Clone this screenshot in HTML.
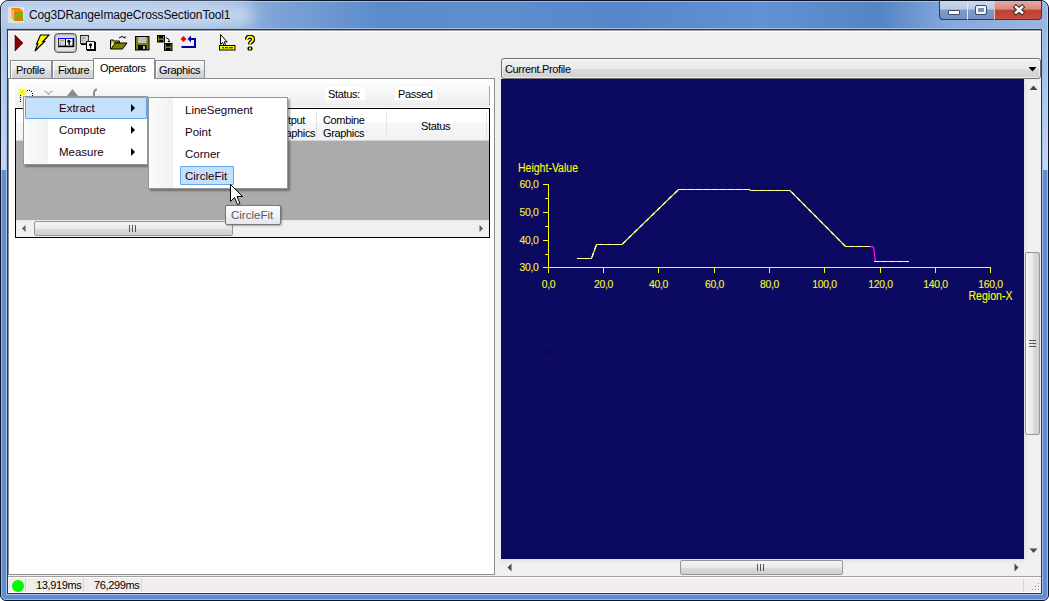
<!DOCTYPE html>
<html><head><meta charset="utf-8">
<style>
*{margin:0;padding:0;box-sizing:border-box}
html,body{width:1049px;height:601px;overflow:hidden;background:#fff}
body{position:relative;font-family:"Liberation Sans",sans-serif;font-size:12px;color:#000}
.a{position:absolute}
.t{position:absolute;white-space:nowrap;line-height:1}
#frame{left:0;top:0;width:1049px;height:601px;border:1px solid #0d1626;border-radius:8px 8px 6px 6px;
 background:linear-gradient(90deg,#aac2e3 0px,#a2bce0 200px,#7ba2d6 280px,#5c8bcc 380px,#5f8ecf 500px,#5686c9 620px,#6391d3 760px,#5584c5 880px,#86aadc 950px,#9ab6dd 1049px) top/100% 29px no-repeat,#5f8ecf}
#frame2{left:1px;top:1px;width:1047px;height:599px;border:1px solid rgba(205,225,250,.55);border-radius:7px 7px 5px 5px}
#titleglow{left:4px;top:3px;width:250px;height:24px;border-radius:12px;background:rgba(215,228,245,.7);filter:blur(7px)}
#client0{left:6px;top:28px;width:1037px;height:567px;border:1px solid #a4c0e8}
#client{left:7px;top:29px;width:1035px;height:565px;background:#f0f0f0;border:1px solid #2b3a56}
/* window buttons */
.wb{top:1px;height:19px;border:1px solid #2b3a55;border-top:none}
</style></head><body>
<div class="a" id="frame"></div>
<div class="a" style="left:1px;top:20px;width:6px;height:150px;background:linear-gradient(#a9c1e2,#c4d5ee)"></div>
<div class="a" style="left:1042px;top:20px;width:6px;height:150px;background:linear-gradient(#9ab6dd,#c4d5ee)"></div>
<div class="a" id="frame2"></div>
<div class="a" id="titleglow"></div>
<!-- app icon -->
<svg class="a" style="left:8px;top:7px" width="16" height="16" viewBox="0 0 16 16">
 <rect x="0" y="0" width="16" height="16" fill="#e4e2dd"/>
 <polygon points="3,1 11.5,1 15,4.3 6.2,4.3" fill="#f28a00"/>
 <polygon points="3,1 6.2,4.3 6.2,14 3,10.5" fill="#ffb055"/>
 <polygon points="6.2,4.3 15,4.3 15,14 6.2,14" fill="#e07600"/>
 <polyline points="6.3,12.2 9.7,7 13.8,7 13.8,12.6 15.5,12.6" fill="none" stroke="#10f010" stroke-width="1.5"/>
</svg>
<div class="t" style="left:29px;top:9px;font-size:12px;letter-spacing:-0.15px;color:#050a18">Cog3DRangeImageCrossSectionTool1</div>
<!-- window buttons -->
<div class="a wb" style="left:939px;width:29px;border-radius:0 0 0 4px;background:linear-gradient(#cad8ec 0,#b9cbe6 45%,#7c9bc9 50%,#7392c3 100%)"></div>
<div class="a wb" style="left:967px;width:28px;border-left-color:#dfe8f4;background:linear-gradient(#cad8ec 0,#b9cbe6 45%,#7c9bc9 50%,#7392c3 100%)"></div>
<div class="a wb" style="left:994px;width:48px;border-left-color:#e8c0b8;border-radius:0 0 4px 0;background:linear-gradient(#e8aaa2 0,#d88a80 45%,#c0402e 52%,#c8503c 100%)"></div>
<div class="a" style="left:948px;top:10px;width:12px;height:5px;background:#fff;border:1px solid #3a4a66;border-radius:1px"></div>
<div class="a" style="left:976px;top:6px;width:10px;height:8px;background:#7393c4;border:2px solid #f4f6fa;outline:1px solid #3a4a66;border-radius:1px"></div>
<svg class="a" style="left:1012px;top:4px" width="14" height="12" viewBox="0 0 14 12"><path d="M4,3 L10,8.5 M10,3 L4,8.5" stroke="#3a2a2a" stroke-width="4.6" stroke-linecap="square"/><path d="M4,3 L10,8.5 M10,3 L4,8.5" stroke="#fff" stroke-width="2.6" stroke-linecap="square"/></svg>

<div class="a" id="client0"></div>
<div class="a" id="client"></div>

<!-- toolbar -->
<div class="a" style="left:8px;top:30px;width:1033px;height:1px;background:#a0a0a0"></div>
<div class="a" style="left:8px;top:31px;width:1033px;height:1px;background:#fff"></div>
<!-- play -->
<svg class="a" style="left:14px;top:34px" width="10" height="18" viewBox="0 0 10 18"><polygon points="1,1 9,9 1,17" fill="#800000" stroke="#400" stroke-width="0.6"/></svg>
<!-- lightning -->
<svg class="a" style="left:34px;top:34px" width="16" height="18" viewBox="0 0 16 18"><polygon points="6.5,1 15,1 9,7.5 10.5,7.5 1,17 3.8,10 2.6,10" fill="#ffff00" stroke="#000" stroke-width="1.2" stroke-linejoin="miter"/></svg>
<!-- pressed button -->
<div class="a" style="left:54px;top:33px;width:23px;height:20px;border:1px solid #5e5e5e;border-radius:4px;background:linear-gradient(#d2d2d2,#e2e2e2 45%,#e6e6e6);box-shadow:inset 0 0 1px 1px #a8a8a8"></div>
<svg class="a" style="left:57px;top:37px" width="18" height="11" viewBox="0 0 18 11">
 <rect x="1.5" y="1.5" width="7" height="7.5" fill="#d0d0d0" stroke="#333" stroke-width="1"/><rect x="1" y="1" width="8" height="1" fill="#0000ff"/>
 <rect x="3" y="3" width="4" height="1" fill="#999"/><rect x="3" y="5" width="1" height="1" fill="#999"/><rect x="3" y="7" width="1" height="1" fill="#999"/>
 <rect x="8.5" y="1.5" width="7.5" height="7.5" fill="#fff" stroke="#000" stroke-width="1"/><rect x="8" y="1" width="9" height="1" fill="#0000ff"/>
 <circle cx="11.8" cy="4.3" r="1.5" fill="#000"/><rect x="11.5" y="4.5" width="1.4" height="3.5" fill="#000"/><rect x="12" y="4" width="1.5" height="1.2" fill="#000"/>
 <rect x="1" y="9" width="16" height="1.2" fill="#000"/><rect x="16" y="1" width="1.2" height="9" fill="#000"/>
</svg>
<!-- float windows icon -->
<svg class="a" style="left:80px;top:35px" width="16" height="16" viewBox="0 0 16 16">
 <rect x="0.5" y="0.5" width="8" height="8" fill="#d0d0d0" stroke="#333" stroke-width="1"/><rect x="0" y="0" width="9" height="1" fill="#0000ff"/>
 <rect x="2" y="2.5" width="3" height="1" fill="#888"/><rect x="2" y="5" width="1" height="1" fill="#888"/>
 <rect x="1" y="9" width="6" height="1" fill="#000"/>
 <rect x="6.5" y="6.5" width="8" height="8" fill="#fff" stroke="#000" stroke-width="1"/><rect x="6" y="6" width="9" height="1" fill="#0000ff"/>
 <circle cx="10.5" cy="9.8" r="1.6" fill="#000"/><rect x="10" y="10" width="1.2" height="3.5" fill="#000"/>
 <rect x="7" y="15" width="9" height="1" fill="#000"/><rect x="15" y="7" width="1" height="9" fill="#000"/>
</svg>
<!-- open folder -->
<svg class="a" style="left:110px;top:35px" width="18" height="15" viewBox="0 0 18 15">
 <path d="M9,3 q3,-3 6,0" fill="none" stroke="#000" stroke-width="1"/><path d="M14,2 l1.5,1.5 l0,-2.5" fill="#000"/>
 <path d="M0.5,5 h3 l1,1 h5 v2 h-9z" fill="#c8c800" stroke="#000" stroke-width="1"/>
 <path d="M0.5,5.5 v8.5 h12 l4.5,-6 h-12 l-4,6" fill="#808000" stroke="#000" stroke-width="1"/>
 <path d="M1.5,7 v5 l3,-4z" fill="#ffff80"/>
</svg>
<!-- save -->
<svg class="a" style="left:135px;top:36px" width="15" height="15" viewBox="0 0 15 15">
 <rect x="0.5" y="0.5" width="13.5" height="13.5" fill="#808000" stroke="#000"/>
 <rect x="3" y="1" width="8.5" height="6" fill="#c0c0c0"/>
 <rect x="3" y="9" width="8.5" height="5" fill="#000"/><rect x="8" y="10" width="2" height="3" fill="#c0c0c0"/>
</svg>
<!-- save all -->
<svg class="a" style="left:157px;top:35px" width="16" height="16" viewBox="0 0 16 16">
 <rect x="0.5" y="0.5" width="7" height="6.5" fill="#808000" stroke="#000"/><rect x="2" y="1" width="4" height="2.5" fill="#000"/><rect x="2" y="5" width="4" height="2" fill="#000"/>
 <rect x="7.5" y="8.5" width="7.5" height="7" fill="#808000" stroke="#000"/><rect x="9" y="9" width="4.5" height="2.5" fill="#000"/><rect x="9" y="13" width="4.5" height="2.5" fill="#000"/>
 <path d="M9,2.5 l3,2 v2" fill="none" stroke="#000" stroke-width="0.9"/><path d="M10.5,6 l1.5,1.5 l1.5,-1.5z" fill="#000"/>
</svg>
<!-- red dot arrow -->
<svg class="a" style="left:180px;top:35px" width="17" height="14" viewBox="0 0 17 14">
 <path d="M3.5,1 l3,3 l-3,3 l-3,-3z" fill="#f00"/>
 <path d="M11,0.5 l-3.5,3.5 l3.5,3.5z" fill="#00a"/><rect x="10" y="3" width="5.5" height="2" fill="#00a"/><rect x="14" y="3" width="2" height="10" fill="#00a"/><rect x="1.5" y="11" width="14.5" height="2" fill="#00a"/>
</svg>
<!-- select ruler -->
<svg class="a" style="left:219px;top:34px" width="17" height="17" viewBox="0 0 17 17">
 <path d="M1.5,0.5 v10 l2,-2 l1.5,3 l1.5,-0.8 l-1.3,-2.8 h3z" fill="#fff" stroke="#000" stroke-width="1"/>
 <rect x="0.5" y="11.5" width="15.5" height="4.5" fill="#ff0" stroke="#000" stroke-width="1"/>
 <rect x="3" y="13.3" width="11" height="1" fill="#000"/><rect x="5" y="13" width="1" height="1.6" fill="#ff0"/><rect x="9" y="13" width="1" height="1.6" fill="#ff0"/>
</svg>
<!-- help -->
<svg class="a" style="left:244px;top:35px" width="12" height="16" viewBox="0 0 12 16">
 <path d="M3,4.5 q0,-2.8 3,-2.8 q3,0 3,2.6 q0,1.8 -2,2.8 q-1,0.6 -1,2.5" fill="none" stroke="#000" stroke-width="4.2"/>
 <path d="M3,4.5 q0,-2.8 3,-2.8 q3,0 3,2.6 q0,1.8 -2,2.8 q-1,0.6 -1,2.5" fill="none" stroke="#ff0" stroke-width="1.8"/>
 <rect x="3.5" y="11.5" width="5" height="4" rx="1.5" fill="#000"/><rect x="5" y="12.5" width="2" height="2" fill="#ff0"/>
</svg>
<!-- tabs -->
<style>
.tab{position:absolute;top:60px;height:18px;border:1px solid #898c95;border-bottom:none;background:linear-gradient(#f3f3f3 0,#ebebeb 50%,#dddddd 52%,#d0d0d0 100%);box-shadow:inset 1px 1px 0 #fff}
.tt{position:absolute;font-size:11px;letter-spacing:-0.35px;color:#000;white-space:nowrap;line-height:1}
</style>
<div class="a" style="left:8px;top:78px;width:487px;height:497px;background:#fff;border:1px solid #898c95"></div>
<div class="tab" style="left:10px;width:42px"></div>
<div class="tab" style="left:52px;width:42px"></div>
<div class="tab" style="left:155px;width:50px"></div>
<div class="a" style="left:93px;top:58px;width:62px;height:21px;border:1px solid #898c95;border-bottom:none;background:#fff"></div>
<div class="tt" style="left:16px;top:65px">Profile</div>
<div class="tt" style="left:58px;top:65px">Fixture</div>
<div class="tt" style="left:100px;top:63px">Operators</div>
<div class="tt" style="left:159px;top:65px">Graphics</div>

<!-- operators tab content -->
<div class="a" style="left:15px;top:83px;width:475px;height:24px;border-radius:3px;background:linear-gradient(#fcfcfc,#ededed)"></div>
<div class="a" style="left:489px;top:86px;width:1px;height:20px;background:#a8a8a8"></div>
<!-- small toolbar icons -->
<svg class="a" style="left:18px;top:88px" width="16" height="15" viewBox="0 0 16 15">
 <g fill="#000"><rect x="2" y="5" width="1" height="1"/><rect x="2" y="7" width="1" height="1"/><rect x="2" y="9" width="1" height="1"/><rect x="2" y="11" width="1" height="1"/><rect x="2" y="13" width="1" height="1"/>
 <rect x="9" y="2" width="1" height="1"/><rect x="11" y="2" width="1" height="1"/><rect x="13" y="3" width="1" height="1"/><rect x="14" y="5" width="1" height="1"/><rect x="14" y="7" width="1" height="1"/></g>
 <path d="M1,1 l6,6 M7,1 l-6,6 M4,0 v8 M0,4 h8" stroke="#ffff00" stroke-width="1.2"/>
 <path d="M2,2 l4,4 M6,2 l-4,4" stroke="#d8d800" stroke-width="0.6"/>
</svg>
<svg class="a" style="left:43px;top:90px" width="11" height="7" viewBox="0 0 11 7"><path d="M1,1.5 h2 l2.5,3 l2.5,-3 h2" fill="none" stroke="#b0b0b0" stroke-width="1.2"/></svg>
<svg class="a" style="left:66px;top:88px" width="13" height="8" viewBox="0 0 13 8"><polygon points="6.5,1 12,8 1,8" fill="#8c8c8c"/></svg>
<svg class="a" style="left:91px;top:88px" width="7" height="8" viewBox="0 0 7 8"><path d="M6,1.5 q-3,0 -3,4 v3" fill="none" stroke="#8c8c8c" stroke-width="2"/></svg>
<div class="a" style="left:325px;top:87px;width:40px;height:13px;background:#fff"></div>
<div class="a" style="left:395px;top:87px;width:42px;height:13px;background:#fff"></div>
<div class="tt" style="left:328px;top:89px">Status:</div>
<div class="tt" style="left:398px;top:89px">Passed</div>

<!-- grid -->
<div class="a" style="left:15px;top:108px;width:475px;height:130px;border:1px solid #000;background:#ababab"></div>
<div class="a" style="left:16px;top:109px;width:473px;height:32px;background:linear-gradient(#fff 0,#fff 40%,#f7f7f8 45%,#f1f2f3 100%);border-bottom:1px solid #d5d5d5"></div>
<div class="a" style="left:316px;top:111px;width:1px;height:28px;background:#e3e3e3"></div>
<div class="a" style="left:386px;top:111px;width:1px;height:28px;background:#e3e3e3"></div>
<div class="a" style="left:486px;top:111px;width:1px;height:28px;background:#e3e3e3"></div>
<div class="tt" style="left:274px;top:115px">Output</div>
<div class="tt" style="left:274px;top:128px">Graphics</div>
<div class="tt" style="left:323px;top:115px">Combine</div>
<div class="tt" style="left:323px;top:128px">Graphics</div>
<div class="tt" style="left:421px;top:121px">Status</div>
<!-- h scroll -->
<div class="a" style="left:16px;top:220px;width:473px;height:17px;background:#f0f0f0;border-top:1px solid #e8e8e8"></div>
<svg class="a" style="left:21px;top:224px" width="6" height="9" viewBox="0 0 6 9"><polygon points="4.5,1 4.5,8 1,4.5" fill="#5a5a5a"/></svg>
<svg class="a" style="left:478px;top:224px" width="6" height="9" viewBox="0 0 6 9"><polygon points="1.5,1 1.5,8 5,4.5" fill="#5a5a5a"/></svg>
<div class="a" style="left:34px;top:221px;width:199px;height:15px;border:1px solid #979797;border-radius:2px;background:linear-gradient(#f4f4f4,#e9e9e9 50%,#dbdbdb 51%,#d0d0d0)"></div>
<svg class="a" style="left:129px;top:225px" width="7" height="7" viewBox="0 0 7 7"><path d="M0.5,0 v7 M3.5,0 v7 M6.5,0 v7" stroke="#555" stroke-width="1"/></svg>

<!-- context menu -->
<style>
.menu{position:absolute;background:#fff;border:1px solid #979797;box-shadow:2px 2px 2px rgba(0,0,0,.35)}
.mt{position:absolute;font-size:11.5px;color:#1a0010;white-space:nowrap;line-height:1}
.arr{position:absolute;width:0;height:0;border-top:4px solid transparent;border-bottom:4px solid transparent;border-left:4px solid #000}
</style>
<div class="menu" style="left:23px;top:96px;width:125px;height:69px"></div>
<div class="a" style="left:24px;top:97px;width:24px;height:67px;background:linear-gradient(90deg,#fbfbfb,#f1f1f1)"></div>
<div class="a" style="left:25px;top:97px;width:122px;height:22px;border:1px solid #5ea5ee;background:#c4e0fb;border-radius:1px"></div>
<div class="mt" style="left:59px;top:103px">Extract</div>
<div class="mt" style="left:59px;top:125px">Compute</div>
<div class="mt" style="left:59px;top:147px">Measure</div>
<div class="arr" style="left:131px;top:104px"></div>
<div class="arr" style="left:131px;top:126px"></div>
<div class="arr" style="left:131px;top:148px"></div>
<!-- submenu -->
<div class="menu" style="left:148px;top:97px;width:140px;height:92px"></div>
<div class="a" style="left:149px;top:98px;width:24px;height:90px;background:linear-gradient(90deg,#fbfbfb,#f1f1f1)"></div>
<div class="a" style="left:180px;top:166px;width:54px;height:19px;border:1px solid #5ea5ee;background:#c4e0fb;border-radius:1px"></div>
<div class="mt" style="left:185px;top:105px">LineSegment</div>
<div class="mt" style="left:185px;top:127px">Point</div>
<div class="mt" style="left:185px;top:149px">Corner</div>
<div class="mt" style="left:185px;top:171px">CircleFit</div>
<!-- cursor -->
<svg class="a" style="left:229px;top:183px" width="16" height="24" viewBox="0 0 16 24">
 <path d="M1.5,1.5 V18.5 L5.5,14.5 L8.5,21.5 L11,20.5 L8,13.5 H13.5 Z" fill="#fff" stroke="#000" stroke-width="1" stroke-linejoin="miter"/>
</svg>
<!-- tooltip -->
<div class="a" style="left:225px;top:205px;width:56px;height:20px;border:1px solid #767676;border-radius:2px;background:linear-gradient(#fff,#e4e5f0);box-shadow:1px 1px 2px rgba(0,0,0,.3)"></div>
<div class="mt" style="left:231px;top:210px;color:#575757">CircleFit</div>

<!-- right panel -->
<div class="a" style="left:501px;top:58px;width:540px;height:21px;border:1px solid #707070;border-radius:3px;background:linear-gradient(#f2f2f2 0,#ebebeb 50%,#dddddd 51%,#cfcfcf 100%);box-shadow:inset 0 0 0 1px rgba(255,255,255,.6)"></div>
<div class="tt" style="left:505px;top:64px">Current.Profile</div>
<svg class="a" style="left:1028px;top:67px" width="9" height="5" viewBox="0 0 9 5"><polygon points="0.5,0 8.5,0 4.5,4.5" fill="#000"/></svg>
<div class="a" style="left:501px;top:79px;width:523px;height:480px;background:#0b0a60"></div>

<!-- chart -->
<svg class="a" style="left:501px;top:79px" width="523" height="480" viewBox="501 79 523 480">
 <g stroke="#ffff00" stroke-width="1" shape-rendering="crispEdges" fill="none">
  <path d="M548.5,184 V273 M543,267.5 H991"/>
  <path d="M543,184.5 H548 M543,212.5 H548 M543,240.5 H548 M545,198.5 H548 M545,226.5 H548 M545,254.5 H548"/>
  <path d="M548.5,267 V273 M603.5,267 V273 M658.5,267 V273 M714.5,267 V273 M769.5,267 V273 M824.5,267 V273 M880.5,267 V273 M935.5,267 V273 M990.5,267 V273 "/>
 </g>
 <g font-family="Liberation Sans" font-size="10.4" letter-spacing="-0.3" fill="#f4f430" stroke="#f4f430" stroke-width="0.12"><text x="548.5" y="287.5" text-anchor="middle">0,0</text><text x="603.5" y="287.5" text-anchor="middle">20,0</text><text x="658.5" y="287.5" text-anchor="middle">40,0</text><text x="714.5" y="287.5" text-anchor="middle">60,0</text><text x="769.5" y="287.5" text-anchor="middle">80,0</text><text x="824.5" y="287.5" text-anchor="middle">100,0</text><text x="880.5" y="287.5" text-anchor="middle">120,0</text><text x="935.5" y="287.5" text-anchor="middle">140,0</text><text x="990.5" y="287.5" text-anchor="middle">160,0</text><text x="538.5" y="188.0" text-anchor="end">60,0</text><text x="538.5" y="216.0" text-anchor="end">50,0</text><text x="538.5" y="244.0" text-anchor="end">40,0</text><text x="538.5" y="271.0" text-anchor="end">30,0</text></g>
 <text x="518" y="172" font-family="Liberation Sans" font-size="12.3" textLength="60" lengthAdjust="spacingAndGlyphs" fill="#ffff00" stroke="#ffff00" stroke-width="0.1">Height-Value</text>
 <text x="968.5" y="300" font-family="Liberation Sans" font-size="12.3" textLength="44" lengthAdjust="spacingAndGlyphs" fill="#ffff00" stroke="#ffff00" stroke-width="0.1">Region-X</text>
 <polyline points="577,258.5 591.5,258.5 596.5,244.5 622,244.5 678.5,189.5 749.5,189.5 750.5,190.5 790,190.5 845.5,246.5 870.5,246.5" fill="none" stroke="#ffff20" stroke-width="1.2"/>
 <polyline points="577,258.5 591.5,258.5 596.5,244.5 622,244.5 678.5,189.5 749.5,189.5 750.5,190.5 790,190.5 845.5,246.5 870.5,246.5" fill="none" stroke="#ffffff" stroke-width="1.2" stroke-dasharray="4,4"/>
 <polyline points="870.5,246.5 873.5,247 875.5,261.5" fill="none" stroke="#ff00ff" stroke-width="1.3"/>
 <polyline points="874,261.5 909,261.5" fill="none" stroke="#ffff20" stroke-width="1.2"/>
 <polyline points="874,261.5 909,261.5" fill="none" stroke="#ffffff" stroke-width="1.2" stroke-dasharray="4,4"/>
 <rect x="548" y="351" width="2" height="2" fill="#000"/>
</svg>
<!-- v scroll -->
<div class="a" style="left:1024px;top:79px;width:17px;height:480px;background:linear-gradient(90deg,#e3e3e3,#f0f0f0 30%,#f0f0f0)"></div>
<svg class="a" style="left:1029px;top:85px" width="9" height="6" viewBox="0 0 9 6"><polygon points="4.5,0.5 8.5,5 0.5,5" fill="#4a4a4a"/></svg>
<svg class="a" style="left:1029px;top:548px" width="9" height="6" viewBox="0 0 9 6"><polygon points="0.5,0.5 8.5,0.5 4.5,5" fill="#4a4a4a"/></svg>
<div class="a" style="left:1025px;top:252px;width:15px;height:183px;border:1px solid #979797;border-radius:2px;background:linear-gradient(90deg,#f4f4f4,#e9e9e9 50%,#dbdbdb 51%,#d0d0d0)"></div>
<svg class="a" style="left:1029px;top:340px" width="7" height="7" viewBox="0 0 7 7"><path d="M0,0.5 h7 M0,3.5 h7 M0,6.5 h7" stroke="#555" stroke-width="1"/></svg>
<!-- h scroll -->
<div class="a" style="left:501px;top:559px;width:523px;height:17px;background:linear-gradient(#e3e3e3,#f0f0f0 30%,#f0f0f0)"></div>
<div class="a" style="left:1024px;top:559px;width:17px;height:17px;background:#f0f0f0"></div>
<svg class="a" style="left:507px;top:563px" width="6" height="9" viewBox="0 0 6 9"><polygon points="4.5,0.5 4.5,8.5 0.5,4.5" fill="#4a4a4a"/></svg>
<svg class="a" style="left:1013px;top:563px" width="6" height="9" viewBox="0 0 6 9"><polygon points="1.5,0.5 1.5,8.5 5.5,4.5" fill="#4a4a4a"/></svg>
<div class="a" style="left:680px;top:560px;width:163px;height:15px;border:1px solid #979797;border-radius:2px;background:linear-gradient(#f4f4f4,#e9e9e9 50%,#dbdbdb 51%,#d0d0d0)"></div>
<svg class="a" style="left:757px;top:564px" width="7" height="7" viewBox="0 0 7 7"><path d="M0.5,0 v7 M3.5,0 v7 M6.5,0 v7" stroke="#555" stroke-width="1"/></svg>
<!-- status bar -->
<div class="a" style="left:8px;top:576px;width:1033px;height:1px;background:#a0a0a0"></div>
<div class="a" style="left:8px;top:577px;width:1033px;height:16px;background:#f1edec;border-top:1px solid #fff;border-bottom:1px solid #fff"></div>
<div class="a" style="left:25px;top:578px;width:1px;height:14px;background:#d8d6d4"></div>
<div class="a" style="left:83px;top:578px;width:1px;height:14px;background:#d8d6d4"></div>
<div class="a" style="left:141px;top:578px;width:1px;height:14px;background:#d8d6d4"></div>
<div class="a" style="left:1023px;top:579px;width:1px;height:13px;background:#d8d6d4"></div>
<div class="a" style="left:12px;top:580px;width:12px;height:12px;border-radius:50%;background:radial-gradient(circle at 40% 40%,#00ff00 0,#00f800 65%,#00a000 100%)"></div>
<div class="tt" style="left:36px;top:580px">13,919ms</div>
<div class="tt" style="left:94px;top:580px">76,299ms</div>
<svg class="a" style="left:1031px;top:582px" width="10" height="10" viewBox="0 0 10 10">
 <g fill="#fff"><rect x="8" y="2" width="1" height="1"/><rect x="5" y="5" width="1" height="1"/><rect x="8" y="5" width="1" height="1"/><rect x="2" y="8" width="1" height="1"/><rect x="5" y="8" width="1" height="1"/><rect x="8" y="8" width="1" height="1"/></g><g fill="#9a9a9a"><rect x="7" y="1" width="1" height="1"/><rect x="4" y="4" width="1" height="1"/><rect x="7" y="4" width="1" height="1"/><rect x="1" y="7" width="1" height="1"/><rect x="4" y="7" width="1" height="1"/><rect x="7" y="7" width="1" height="1"/></g>
</svg>
</body></html>
